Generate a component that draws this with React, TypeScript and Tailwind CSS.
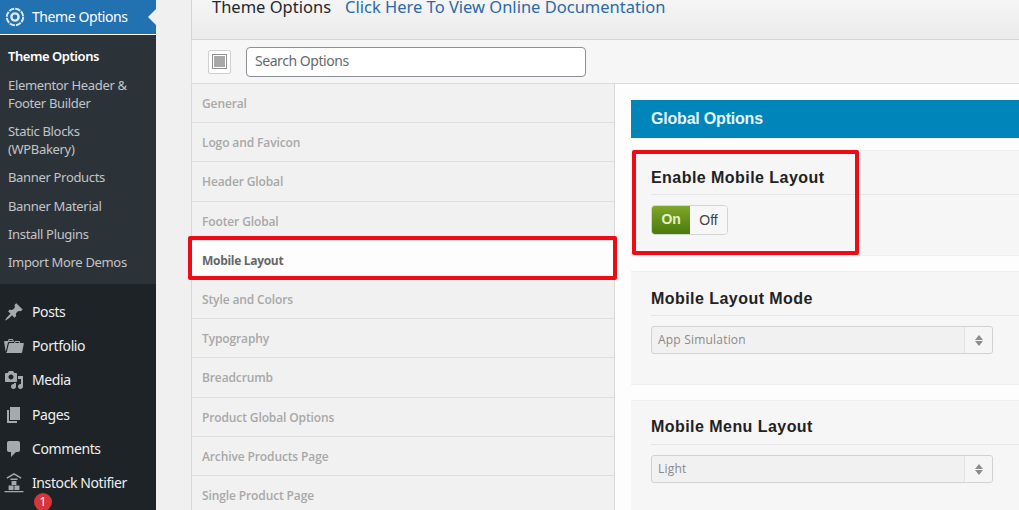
const post = "M10.44 3.02l1.82-1.82 6.36 6.35-1.83 1.82c-1.05-.68-2.48-.57-3.41.36l-.75.75c-.92.93-1.04 2.35-.35 3.41l-1.83 1.82-2.41-2.41-2.8 2.79c-.42.42-3.38 2.71-3.8 2.29s1.86-3.39 2.28-3.81l2.79-2.79L4.1 9.36l1.83-1.82c1.05.69 2.48.57 3.4-.36l.75-.75c.93-.92 1.05-2.35.36-3.41z";
const portfolio = "M4 5H.78c-.37 0-.74.32-.69.84l1.56 9.99S3.5 8.47 3.86 6.7c.11-.53.61-.7.98-.7H10s-.7-2.08-.77-2.31C9.11 3.25 8.89 3 8.45 3H5.14c-.36 0-.7.23-.8.64C4.25 4.04 4 5 4 5zm4.88 0h-4s.42-1 .87-1h2.13c.45 0 1 1 1 1zM2.67 16.25c-.31.47-.76.75-1.26.75h15.73c.54 0 .92-.31 1.03-.83.44-2.19 1.68-8.44 1.68-8.44.07-.5-.3-.73-.62-.73H16V5.53c0-.16-.26-.53-.66-.53h-3.76c-.52 0-.87.58-.87.58L10 7H5.59c-.32 0-.63.19-.69.5 0 0-1.59 6.7-1.72 7.33-.07.37-.22.99-.51 1.42zM15.38 7H11s.58-1 1.13-1h2.29c.71 0 .96 1 .96 1z";
const media = "M13 11V4c0-.55-.45-1-1-1h-1.67L9 1H5L3.67 3H2c-.55 0-1 .45-1 1v7c0 .55.45 1 1 1h10c.55 0 1-.45 1-1zM7 4.5c1.38 0 2.5 1.12 2.5 2.5S8.38 9.5 7 9.5 4.5 8.38 4.5 7 5.62 4.5 7 4.5zM14 6h5v10.5c0 1.38-1.12 2.5-2.5 2.5S14 17.88 14 16.5s1.12-2.5 2.5-2.5c.17 0 .34.02.5.05V9h-3V6zm-4 8.05V13h2v3.5c0 1.38-1.12 2.5-2.5 2.5S7 17.88 7 16.5 8.12 14 9.5 14c.17 0 .34.02.5.05z";
const pages = "M6 15V2h10v13H6zm-1 1h8v2H3V5h2v11z";
const comments = "M5 2h9c1.1 0 2 .9 2 2v7c0 1.1-.9 2-2 2h-2l-5 5v-5H5c-1.1 0-2-.9-2-2V4c0-1.1.9-2 2-2z";

function Dash({ d }: { d: string }) {
  return (
    <svg viewBox="0 0 20 20" className="w-[20px] h-[20px] fill-[#a7aaad]">
      <path d={d} />
    </svg>
  );
}

function Gear() {
  return (
    <svg viewBox="0 0 20 20" className="w-[20px] h-[20px]" fill="none" stroke="#dfe9f3">
      <circle cx="10" cy="10" r="8.2" strokeWidth="2" strokeDasharray="5.4 1.04" />
      <circle cx="10" cy="10" r="3.6" strokeWidth="2.4" />
    </svg>
  );
}

function Store() {
  return (
    <svg viewBox="0 0 20 20" className="w-[20px] h-[20px] fill-[#a7aaad]">
      <path d="M10 0l7.5 4.6-.7 1.1L10 1.8 3.2 5.7l-.7-1.1z" />
      <path d="M6.5 5.6h7v1.3h-7zM7.6 8h4.8v4h-4.8zM4.6 12.6h5V17h-5zM10.4 12.6h5V17h-5zM.5 18h19v1.2H.5z" />
    </svg>
  );
}

const subItems: { label: string; cls: string }[] = [
  { label: "Theme Options", cls: "font-semibold text-white h-[31px] pt-[2px] tracking-[-0.45px]" },
  { label: "Elementor Header & Footer Builder", cls: "text-[#c3c4c7] h-[46px] tracking-[-0.33px]" },
  { label: "Static Blocks (WPBakery)", cls: "text-[#c3c4c7] h-[46px] tracking-[-0.33px]" },
  { label: "Banner Products", cls: "text-[#c3c4c7] h-[29px] tracking-[-0.33px]" },
  { label: "Banner Material", cls: "text-[#c3c4c7] h-[28px] tracking-[-0.33px]" },
  { label: "Install Plugins", cls: "text-[#c3c4c7] h-[28px] tracking-[-0.33px]" },
  { label: "Import More Demos", cls: "text-[#c3c4c7] h-[28px] tracking-[-0.33px]" },
];

const menu: { label: string; d?: string }[] = [
  { label: "Posts", d: post },
  { label: "Portfolio", d: portfolio },
  { label: "Media", d: media },
  { label: "Pages", d: pages },
  { label: "Comments", d: comments },
  { label: "Instock Notifier" },
];

const nav = [
  "General",
  "Logo and Favicon",
  "Header Global",
  "Footer Global",
  "Mobile Layout",
  "Style and Colors",
  "Typography",
  "Breadcrumb",
  "Product Global Options",
  "Archive Products Page",
  "Single Product Page",
];

function SelectBox({ value }: { value: string }) {
  return (
    <div className="w-[342px] h-[28px] flex bg-[#f1f1f1] border border-[#d2d2d2] rounded-[3px] font-['Open_Sans',sans-serif] text-[12px] text-[#8a8a8a]">
      <div className="flex-1 flex items-center pl-[6px] tracking-[0.2px]">{value}</div>
      <div className="w-[28px] border-l border-[#e3e3e3] bg-[#f5f5f5] rounded-r-[3px] flex flex-col items-center justify-center gap-[1px]">
        <div className="w-0 h-0 border-x-[4px] border-x-transparent border-b-[5px] border-b-[#8c8c8c]" />
        <div className="w-0 h-0 border-x-[4px] border-x-transparent border-t-[5px] border-t-[#8c8c8c]" />
      </div>
    </div>
  );
}

function Field({ title, cls, titleCls, children }: { title: string; cls: string; titleCls: string; children: React.ReactNode }) {
  return (
    <div className={`bg-[#f6f6f6] border-y border-[#efefef] pl-[20px] ${cls}`}>
      <h3 className={`h-[44px] flex items-end border-b border-[#e6e6e6] font-['Liberation_Sans',sans-serif] font-bold text-[16px] leading-[20px] tracking-[0.45px] text-[#222] ${titleCls}`}>
        {title}
      </h3>
      <div className="pt-[10px]">{children}</div>
    </div>
  );
}

export default function App() {
  return (
    <div className="relative w-[1019px] h-[510px] overflow-hidden flex bg-[#f0f0f1] font-['Noto_Sans',sans-serif]">
      <aside className="w-[156px] shrink-0 bg-[#1d2327] flex flex-col text-[13px] leading-[18px]">
        <div className="relative h-[35px] shrink-0 bg-[#2271b1] border-b border-white flex items-center pl-[5px] gap-[7px] text-[14px] tracking-[-0.42px] text-white">
          <Gear />
          <span>Theme Options</span>
          <div className="absolute right-0 top-[9px] w-0 h-0 border-y-[8px] border-y-transparent border-r-[8px] border-r-[#f0f0f1]" />
        </div>
        <div className="h-[249px] shrink-0 bg-[#2c3338] pl-[8px] pr-[20px] pt-[10px]">
          {subItems.map((s) => (
            <div key={s.label} className={s.cls}>
              {s.label}
            </div>
          ))}
        </div>
        <div className="pt-[10.5px]">
          {menu.map((m) => (
            <div key={m.label} className="relative h-[34.3px] flex items-center pl-[4px] gap-[8px] text-[14px] tracking-[-0.4px] text-[#f0f0f1]">
              {m.d ? <Dash d={m.d} /> : <Store />}
              <span>{m.label}</span>
            </div>
          ))}
        </div>
        <div className="absolute left-[34px] top-[493px] w-[18px] h-[18px] rounded-full bg-[#d63638] text-white text-[12px] leading-[18px] text-center">
          1
        </div>
      </aside>

      <main className="flex-1 min-w-0 pl-[35px] flex flex-col">
        <header className="h-[40px] shrink-0 border-l border-b border-[#d4d4d4] bg-gradient-to-b from-[#f5f5f5] to-[#ebebeb] pl-[20px] flex items-start gap-[14px] text-[16.5px] leading-[13px]">
          <span className="text-[#23282d]">Theme Options</span>
          <span className="text-[#2c6aa5]">Click Here To View Online Documentation</span>
        </header>
        <div className="h-[44px] shrink-0 border-l border-b border-[#dcdcdc] bg-[#f6f6f6] flex items-center pl-[16px] gap-[15px]">
          <div className="w-[23px] h-[24px] border border-[#cfcfcf] rounded-[2px] bg-white flex items-center justify-center">
            <div className="w-[15px] h-[15px] border border-[#8f8f8f] p-[1px]">
              <div className="w-full h-full bg-[#a8a8a8]" />
            </div>
          </div>
          <div className="w-[340px] h-[30px] bg-white border border-[#8c8f94] rounded-[4px] flex items-center pl-[8px] pb-[2px] text-[14px] tracking-[-0.45px] text-[#646970]">
            Search Options
          </div>
        </div>
        <div className="flex-1 min-h-0 flex">
          <nav className="w-[424px] shrink-0 border-l border-r border-[#d8d8d8] bg-[#f1f1f1] font-['Open_Sans',sans-serif] text-[12px] font-semibold tracking-[-0.12px]">
            {nav.map((n) => {
              const active = n === "Mobile Layout";
              return (
                <div
                  key={n}
                  className={`h-[39.2px] flex items-center pl-[10px] pt-[2px] border-b ${active ? "bg-[#fdfdfd] text-[#666] border-[#e0e0e0] font-bold tracking-[-0.3px]" : "text-[#a8a8a8] border-[#dedede]"}`}
                >
                  {n}
                </div>
              );
            })}
          </nav>
          <section className="flex-1 min-w-0 bg-[#fdfdfd] pl-[16px] pt-[16px] flex flex-col">
            <div className="h-[38px] shrink-0 bg-[#0085ba] pl-[20px] flex items-center font-['Liberation_Sans',sans-serif] font-bold text-[16px] tracking-[-0.2px] text-[#e8f4f9]">
              Global Options
            </div>
            <Field title="Enable Mobile Layout" titleCls="pb-[6px]" cls="mt-[12px] h-[106px] shrink-0">
              <div className="w-[77px] h-[30px] flex rounded-[4px] border border-[#d4d4d4] overflow-hidden font-['Liberation_Sans',sans-serif] text-[14px]">
                <div className="w-[38px] pb-[1px] bg-gradient-to-b from-[#7fa82a] to-[#4a7a08] text-[#e6f2c8] font-bold flex items-center justify-center tracking-[-0.3px]">On</div>
                <div className="flex-1 bg-[#f7f7f7] text-[#444] flex items-center justify-center">Off</div>
              </div>
            </Field>
            <Field title="Mobile Layout Mode" titleCls="pb-[6px]" cls="mt-[15px] h-[114px] shrink-0">
              <SelectBox value="App Simulation" />
            </Field>
            <Field title="Mobile Menu Layout" titleCls="pb-[7px]" cls="mt-[15px] h-[130px] shrink-0">
              <SelectBox value="Light" />
            </Field>
          </section>
        </div>
      </main>

      <div className="absolute left-[188px] top-[236px] w-[429px] h-[44px] border-[4px] border-[#f00a14] rounded-[2px]" />
      <div className="absolute left-[632px] top-[150px] w-[227px] h-[105px] border-[4px] border-[#f00a14] rounded-[2px]" />
    </div>
  );
}
